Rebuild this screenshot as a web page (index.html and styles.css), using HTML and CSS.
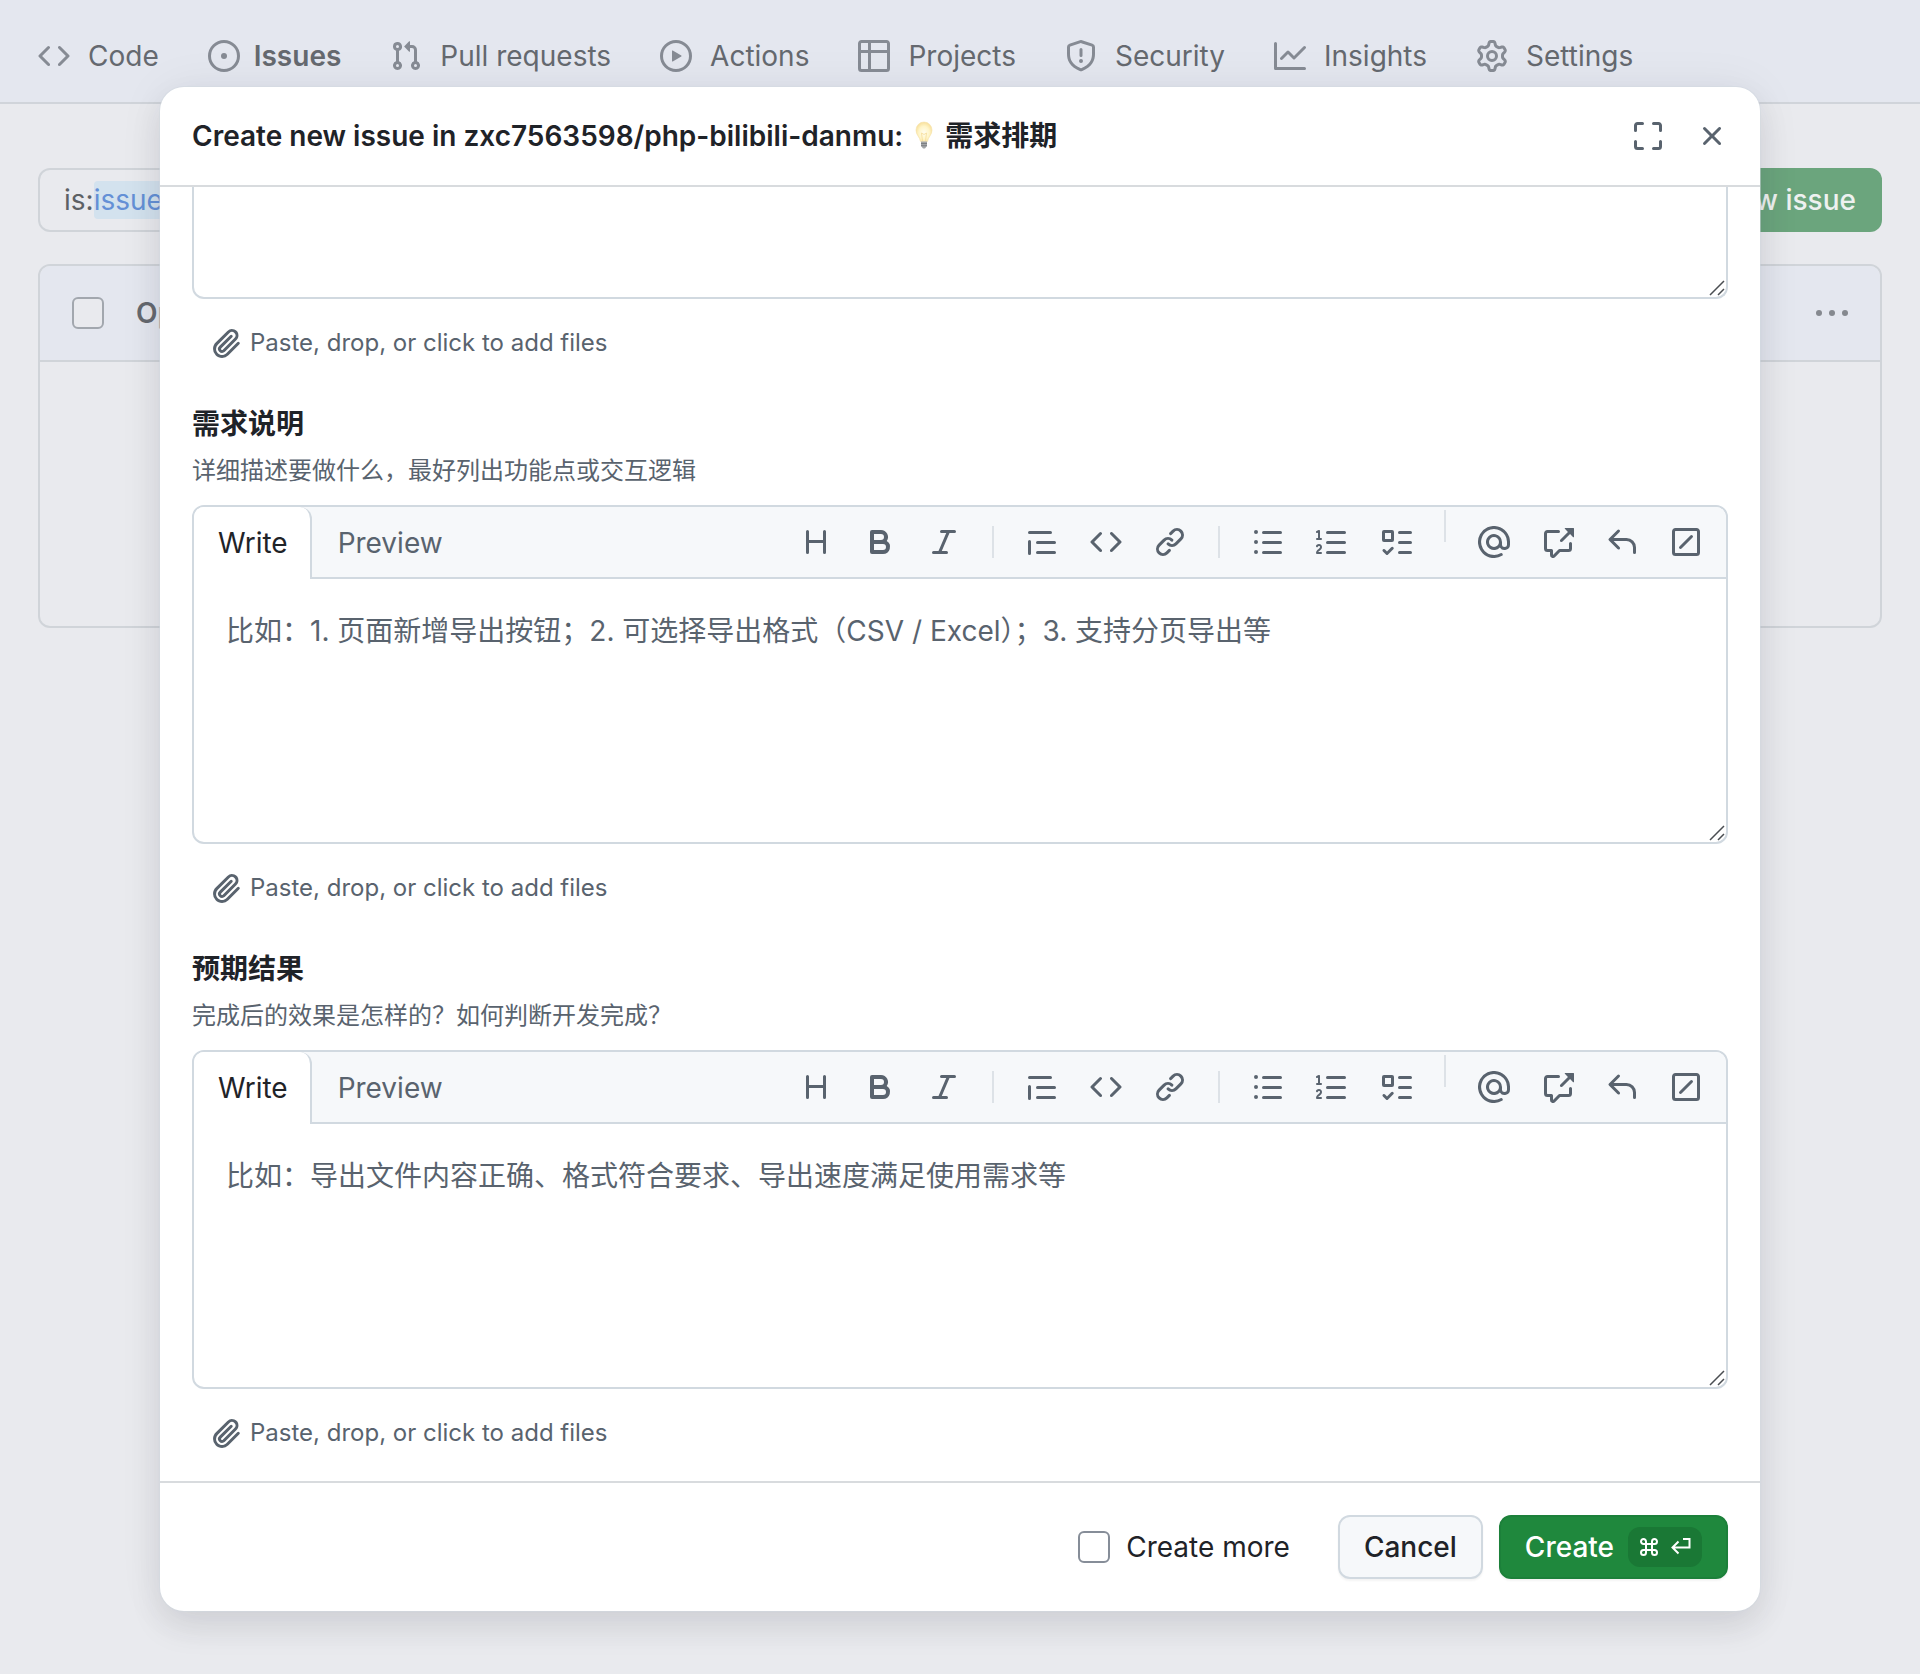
FILE: index.html
```html
<!DOCTYPE html>
<html lang="en">
<head>
<meta charset="utf-8">
<meta name="viewport" content="width=device-width, initial-scale=1">
<title>Create new issue</title>
<link rel="stylesheet" href="styles.css">
</head>
<body>
<svg class="sprite" aria-hidden="true">
  <symbol id="code" viewBox="0 0 16 16"><path d="m11.28 3.22 4.25 4.25a.75.75 0 0 1 0 1.06l-4.25 4.25a.749.749 0 0 1-1.275-.326.749.749 0 0 1 .215-.734L13.94 8l-3.72-3.72a.749.749 0 0 1 .326-1.275.749.749 0 0 1 .734.215Zm-6.56 0a.751.751 0 0 1 1.042.018.751.751 0 0 1 .018 1.042L2.06 8l3.72 3.72a.749.749 0 0 1-.326 1.275.749.749 0 0 1-.734-.215L.47 8.53a.75.75 0 0 1 0-1.06Z"/></symbol>
  <symbol id="issue" viewBox="0 0 16 16"><path d="M8 9.5a1.5 1.5 0 1 0 0-3 1.5 1.5 0 0 0 0 3Z"/><path d="M8 0a8 8 0 1 1 0 16A8 8 0 0 1 8 0ZM1.5 8a6.5 6.5 0 1 0 13 0 6.5 6.5 0 0 0-13 0Z"/></symbol>
  <symbol id="pull" viewBox="0 0 16 16"><path d="M1.5 3.25a2.25 2.25 0 1 1 3 2.122v5.256a2.251 2.251 0 1 1-1.5 0V5.372A2.25 2.25 0 0 1 1.5 3.25Zm5.677-.177L9.573.677A.25.25 0 0 1 10 .854V2.5h1A2.5 2.5 0 0 1 13.5 5v5.628a2.251 2.251 0 1 1-1.5 0V5a1 1 0 0 0-1-1h-1v1.646a.25.25 0 0 1-.427.177L7.177 3.427a.25.25 0 0 1 0-.354ZM3.75 2.5a.75.75 0 1 0 0 1.5.75.75 0 0 0 0-1.5Zm0 9.5a.75.75 0 1 0 0 1.5.75.75 0 0 0 0-1.5Zm8.25.75a.75.75 0 1 0 1.5 0 .75.75 0 0 0-1.5 0Z"/></symbol>
  <symbol id="play" viewBox="0 0 16 16"><path d="M8 0a8 8 0 1 1 0 16A8 8 0 0 1 8 0ZM1.5 8a6.5 6.5 0 1 0 13 0 6.5 6.5 0 0 0-13 0Zm4.879-2.773 4.264 2.559a.25.25 0 0 1 0 .428l-4.264 2.559A.25.25 0 0 1 6 10.559V5.442a.25.25 0 0 1 .379-.215Z"/></symbol>
  <symbol id="table" viewBox="0 0 16 16"><path d="M0 1.75C0 .784.784 0 1.75 0h12.5C15.216 0 16 .784 16 1.75v12.5A1.75 1.75 0 0 1 14.25 16H1.75A1.75 1.75 0 0 1 0 14.25ZM6.5 6.5v8h7.75a.25.25 0 0 0 .25-.25V6.5Zm8-1.5V1.75a.25.25 0 0 0-.25-.25H6.5V5Zm-13 1.5v7.75c0 .138.112.25.25.25H5v-8ZM5 5V1.5H1.75a.25.25 0 0 0-.25.25V5Z"/></symbol>
  <symbol id="shield" viewBox="0 0 16 16"><path d="M7.467.133a1.748 1.748 0 0 1 1.066 0l5.25 1.68A1.75 1.75 0 0 1 15 3.48V7c0 1.566-.32 3.182-1.303 4.682-.983 1.498-2.585 2.813-5.032 3.855a1.697 1.697 0 0 1-1.33 0c-2.447-1.042-4.049-2.357-5.032-3.855C1.32 10.182 1 8.566 1 7V3.48a1.75 1.75 0 0 1 1.217-1.667Zm.61 1.429a.25.25 0 0 0-.153 0l-5.25 1.68a.25.25 0 0 0-.174.238V7c0 1.358.275 2.666 1.057 3.86.784 1.194 2.121 2.34 4.366 3.297a.196.196 0 0 0 .154 0c2.245-.956 3.582-2.104 4.366-3.298C13.225 9.666 13.5 8.36 13.5 7V3.48a.251.251 0 0 0-.174-.237l-5.25-1.68ZM8.75 4.75v3a.75.75 0 0 1-1.5 0v-3a.75.75 0 0 1 1.5 0ZM9 10.5a1 1 0 1 1-2 0 1 1 0 0 1 2 0Z"/></symbol>
  <symbol id="graph" viewBox="0 0 16 16"><path d="M1.5 1.75V13.5h13.75a.75.75 0 0 1 0 1.5H.75a.75.75 0 0 1-.75-.75V1.75a.75.75 0 0 1 1.5 0Zm14.28 2.53-5.25 5.25a.75.75 0 0 1-1.06 0L7 7.06 4.28 9.78a.751.751 0 0 1-1.042-.018.751.751 0 0 1-.018-1.042l3.25-3.25a.75.75 0 0 1 1.06 0L10 7.94l4.72-4.72a.751.751 0 0 1 1.042.018.751.751 0 0 1 .018 1.042Z"/></symbol>
  <symbol id="gear" viewBox="0 0 16 16"><path d="M8 0a8.2 8.2 0 0 1 .701.031C9.444.095 9.99.645 10.16 1.29l.288 1.107c.018.066.079.158.212.224.231.114.454.243.668.386.123.082.233.09.299.071l1.103-.303c.644-.176 1.392.021 1.82.63.27.385.506.792.704 1.218.315.675.111 1.422-.364 1.891l-.814.806c-.049.048-.098.147-.088.294.016.257.016.515 0 .772-.01.147.038.246.088.294l.814.806c.475.469.679 1.216.364 1.891a7.977 7.977 0 0 1-.704 1.217c-.428.61-1.176.807-1.82.63l-1.102-.302c-.067-.019-.177-.011-.3.071a5.909 5.909 0 0 1-.668.386c-.133.066-.194.158-.211.224l-.29 1.106c-.168.646-.715 1.196-1.458 1.26a8.006 8.006 0 0 1-1.402 0c-.743-.064-1.289-.614-1.458-1.26l-.289-1.106c-.018-.066-.079-.158-.212-.224a5.738 5.738 0 0 1-.668-.386c-.123-.082-.233-.09-.299-.071l-1.103.303c-.644.176-1.392-.021-1.82-.63a8.12 8.12 0 0 1-.704-1.218c-.315-.675-.111-1.422.363-1.891l.815-.806c.05-.048.098-.147.088-.294a6.214 6.214 0 0 1 0-.772c.01-.147-.038-.246-.088-.294l-.815-.806C.635 6.045.431 5.298.746 4.623a7.92 7.92 0 0 1 .704-1.217c.428-.61 1.176-.807 1.82-.63l1.102.302c.067.019.177.011.3-.071.214-.143.437-.272.668-.386.133-.066.194-.158.211-.224l.29-1.106C6.009.645 6.556.095 7.299.03 7.53.01 7.764 0 8 0Zm-.571 1.525c-.036.003-.108.036-.137.146l-.289 1.105c-.147.561-.549.967-.998 1.189-.173.086-.34.183-.5.29-.417.278-.97.423-1.529.27l-1.103-.303c-.109-.03-.175.016-.195.045-.22.312-.412.644-.573.99-.014.031-.021.11.059.19l.815.806c.411.406.562.957.53 1.456a4.709 4.709 0 0 0 0 .582c.032.499-.119 1.05-.53 1.456l-.815.806c-.081.08-.073.159-.059.19.162.346.353.677.573.989.02.03.085.076.195.046l1.102-.303c.56-.153 1.113-.008 1.53.27.161.107.328.204.501.29.447.222.85.629.997 1.189l.289 1.105c.029.109.101.143.137.146a6.6 6.6 0 0 0 1.142 0c.036-.003.108-.036.137-.146l.289-1.105c.147-.561.549-.967.998-1.189.173-.086.34-.183.5-.29.417-.278.97-.423 1.529-.27l1.103.303c.109.029.175-.016.195-.045.22-.313.411-.644.573-.99.014-.031.021-.11-.059-.19l-.815-.806c-.411-.406-.562-.957-.53-1.456a4.709 4.709 0 0 0 0-.582c-.032-.499.119-1.05.53-1.456l.815-.806c.081-.08.073-.159.059-.19a6.464 6.464 0 0 0-.573-.989c-.02-.03-.085-.076-.195-.046l-1.102.303c-.56.153-1.113.008-1.53-.27a4.44 4.44 0 0 0-.501-.29c-.447-.222-.85-.629-.997-1.189l-.289-1.105c-.029-.11-.101-.143-.137-.146a6.6 6.6 0 0 0-1.142 0ZM11 8a3 3 0 1 1-6 0 3 3 0 0 1 6 0ZM9.5 8a1.5 1.5 0 1 0-3.001.001A1.5 1.5 0 0 0 9.5 8Z"/></symbol>
  <symbol id="kebab" viewBox="0 0 16 16"><circle cx="1.5" cy="8" r="1.5"/><circle cx="8" cy="8" r="1.5"/><circle cx="14.5" cy="8" r="1.5"/></symbol>
  <symbol id="heading" viewBox="0 0 16 16"><path d="M3.75 2a.75.75 0 0 1 .75.75V7h7V2.75a.75.75 0 0 1 1.5 0v10.5a.75.75 0 0 1-1.5 0V8.5h-7v4.75a.75.75 0 0 1-1.5 0V2.75A.75.75 0 0 1 3.75 2Z"/></symbol>
  <symbol id="bold" viewBox="0 0 16 16"><path d="M4 2h4.5a3.501 3.501 0 0 1 2.852 5.53A3.499 3.499 0 0 1 9.5 14H4a1 1 0 0 1-1-1V3a1 1 0 0 1 1-1Zm1 7v3h4.5a1.5 1.5 0 0 0 0-3Zm3.5-2a1.5 1.5 0 0 0 0-3H5v3Z"/></symbol>
  <symbol id="italic" viewBox="0 0 16 16"><path d="M6 2.75A.75.75 0 0 1 6.75 2h6.5a.75.75 0 0 1 0 1.5h-2.505l-3.858 9H9.25a.75.75 0 0 1 0 1.5h-6.5a.75.75 0 0 1 0-1.5h2.505l3.858-9H6.75A.75.75 0 0 1 6 2.75Z"/></symbol>
  <symbol id="quote" viewBox="0 0 16 16"><path d="M1.75 2.5h10.5a.75.75 0 0 1 0 1.5H1.75a.75.75 0 0 1 0-1.5Zm4 5h8.5a.75.75 0 0 1 0 1.5h-8.5a.75.75 0 0 1 0-1.5Zm0 5h8.5a.75.75 0 0 1 0 1.5h-8.5a.75.75 0 0 1 0-1.5ZM2.5 7.75v6a.75.75 0 0 1-1.5 0v-6a.75.75 0 0 1 1.5 0Z"/></symbol>
  <symbol id="link" viewBox="0 0 16 16"><path d="m7.775 3.275 1.25-1.25a3.5 3.5 0 1 1 4.95 4.95l-2.5 2.5a3.5 3.5 0 0 1-4.95 0 .751.751 0 0 1 .018-1.042.751.751 0 0 1 1.042-.018 1.998 1.998 0 0 0 2.83 0l2.5-2.5a2.002 2.002 0 0 0-2.83-2.83l-1.25 1.25a.751.751 0 0 1-1.042-.018.751.751 0 0 1-.018-1.042Zm-4.69 9.64a1.998 1.998 0 0 0 2.83 0l1.25-1.25a.751.751 0 0 1 1.042.018.751.751 0 0 1 .018 1.042l-1.25 1.25a3.5 3.5 0 1 1-4.95-4.95l2.5-2.5a3.5 3.5 0 0 1 4.95 0 .751.751 0 0 1-.018 1.042.751.751 0 0 1-1.042.018 1.998 1.998 0 0 0-2.83 0l-2.5 2.5a1.998 1.998 0 0 0 0 2.83Z"/></symbol>
  <symbol id="bullets" viewBox="0 0 16 16"><path d="M5.75 2.5h8.5a.75.75 0 0 1 0 1.5h-8.5a.75.75 0 0 1 0-1.5Zm0 5h8.5a.75.75 0 0 1 0 1.5h-8.5a.75.75 0 0 1 0-1.5Zm0 5h8.5a.75.75 0 0 1 0 1.5h-8.5a.75.75 0 0 1 0-1.5ZM2 14a1 1 0 1 1 0-2 1 1 0 0 1 0 2Zm1-6a1 1 0 1 1-2 0 1 1 0 0 1 2 0ZM2 4a1 1 0 1 1 0-2 1 1 0 0 1 0 2Z"/></symbol>
  <symbol id="numbers" viewBox="0 0 16 16"><path d="M5 3.25a.75.75 0 0 1 .75-.75h8.5a.75.75 0 0 1 0 1.5h-8.5A.75.75 0 0 1 5 3.25Zm0 5a.75.75 0 0 1 .75-.75h8.5a.75.75 0 0 1 0 1.5h-8.5A.75.75 0 0 1 5 8.25Zm0 5a.75.75 0 0 1 .75-.75h8.5a.75.75 0 0 1 0 1.5h-8.5a.75.75 0 0 1-.75-.75ZM.924 10.32a.5.5 0 0 1-.851-.525l.001-.001.001-.002.002-.004.007-.011c.097-.144.215-.273.348-.384.228-.19.588-.392 1.068-.392.468 0 .858.181 1.126.484.259.294.377.673.377 1.038 0 .987-.686 1.495-1.156 1.845l-.047.035c-.303.225-.522.4-.654.597h1.357a.5.5 0 0 1 0 1H.5a.5.5 0 0 1-.5-.5c0-1.005.692-1.52 1.167-1.875l.035-.025c.531-.396.8-.625.8-1.078a.57.57 0 0 0-.128-.376C1.806 10.068 1.695 10 1.5 10a.658.658 0 0 0-.429.163.835.835 0 0 0-.144.153ZM2.003 2.5V6h.503a.5.5 0 0 1 0 1H.5a.5.5 0 0 1 0-1h.503V3.308l-.28.14a.5.5 0 0 1-.446-.895l1.003-.5a.5.5 0 0 1 .723.447Z"/></symbol>
  <symbol id="tasks" viewBox="0 0 16 16"><path d="M2 2h4a1 1 0 0 1 1 1v4a1 1 0 0 1-1 1H2a1 1 0 0 1-1-1V3a1 1 0 0 1 1-1Zm4.655 8.595a.75.75 0 0 1 0 1.06L4.03 14.28a.75.75 0 0 1-1.06 0l-1.5-1.5a.749.749 0 0 1 .326-1.275.749.749 0 0 1 .734.215l.97.97 2.095-2.095a.75.75 0 0 1 1.06 0ZM9.75 2.5h5.5a.75.75 0 0 1 0 1.5h-5.5a.75.75 0 0 1 0-1.5Zm0 5h5.5a.75.75 0 0 1 0 1.5h-5.5a.75.75 0 0 1 0-1.5Zm0 5h5.5a.75.75 0 0 1 0 1.5h-5.5a.75.75 0 0 1 0-1.5Zm-7.25-9v3h3v-3Z"/></symbol>
  <symbol id="mention" viewBox="0 0 16 16"><path d="M4.75 2.37a6.501 6.501 0 0 0 6.5 11.26.75.75 0 0 1 .75 1.298A7.999 7.999 0 0 1 .989 4.148 8 8 0 0 1 16 7.75v1.5a2.75 2.75 0 0 1-5.072 1.475 3.999 3.999 0 0 1-6.65-4.19A4 4 0 0 1 12 8v1.25a1.25 1.25 0 0 0 2.5 0V7.867a6.5 6.5 0 0 0-9.75-5.496ZM10.5 8a2.5 2.5 0 1 0-5 0 2.5 2.5 0 0 0 5 0Z"/></symbol>
  <symbol id="crossref" viewBox="0 0 16 16"><path d="M2.75 3.5a.25.25 0 0 0-.25.25v7.5c0 .138.112.25.25.25h2a.75.75 0 0 1 .75.75v2.19l2.72-2.72a.749.749 0 0 1 .53-.22h4.5a.25.25 0 0 0 .25-.25v-2.5a.75.75 0 0 1 1.5 0v2.5A1.75 1.75 0 0 1 13.25 13H9.06l-2.573 2.573A1.458 1.458 0 0 1 4 14.543V13H2.75A1.75 1.75 0 0 1 1 11.25v-7.5C1 2.784 1.784 2 2.75 2h5.5a.75.75 0 0 1 0 1.5ZM16 1.25v4.146a.25.25 0 0 1-.427.177L14.03 4.03l-3.75 3.75a.749.749 0 0 1-1.275-.326.749.749 0 0 1 .215-.734l3.75-3.75-1.543-1.543A.25.25 0 0 1 11.604 1h4.146a.25.25 0 0 1 .25.25Z"/></symbol>
  <symbol id="reply" viewBox="0 0 16 16"><path d="M6.78 1.97a.75.75 0 0 1 0 1.06L3.81 6h6.44A4.75 4.75 0 0 1 15 10.75v2.5a.75.75 0 0 1-1.5 0v-2.5a3.25 3.25 0 0 0-3.25-3.25H3.81l2.97 2.97a.749.749 0 0 1-.326 1.275.749.749 0 0 1-.734-.215L1.47 7.28a.75.75 0 0 1 0-1.06l4.25-4.25a.75.75 0 0 1 1.06 0Z"/></symbol>
  <symbol id="slash" viewBox="0 0 16 16"><path d="M13.25 1c.966 0 1.75.784 1.75 1.75v10.5A1.75 1.75 0 0 1 13.25 15H2.75A1.75 1.75 0 0 1 1 13.25V2.75C1 1.784 1.784 1 2.75 1ZM2.75 2.5a.25.25 0 0 0-.25.25v10.5c0 .138.112.25.25.25h10.5a.25.25 0 0 0 .25-.25V2.75a.25.25 0 0 0-.25-.25Zm8.53 3.28-5.5 5.5a.75.75 0 0 1-1.06-1.06l5.5-5.5a.75.75 0 0 1 1.06 1.06Z"/></symbol>
  <symbol id="clip" viewBox="0 0 16 16"><path d="M12.212 3.02a1.753 1.753 0 0 0-2.478.003l-5.83 5.83a3.007 3.007 0 0 0-.88 2.127c0 .795.315 1.551.88 2.116.567.567 1.333.89 2.126.89.79 0 1.548-.321 2.116-.89l5.48-5.48a.75.75 0 0 1 1.061 1.06l-5.48 5.48a4.492 4.492 0 0 1-3.177 1.33c-1.2 0-2.345-.487-3.187-1.33a4.483 4.483 0 0 1-1.32-3.177c0-1.195.475-2.341 1.32-3.186l5.83-5.83a3.25 3.25 0 0 1 5.553 2.297c0 .863-.343 1.691-.953 2.301L7.439 12.39c-.375.377-.884.59-1.416.593a1.998 1.998 0 0 1-1.412-.593 1.992 1.992 0 0 1 0-2.828l5.48-5.48a.751.751 0 0 1 1.042.018.751.751 0 0 1 .018 1.042l-5.48 5.48a.492.492 0 0 0 0 .707.499.499 0 0 0 .352.154.51.51 0 0 0 .356-.154l5.833-5.827a1.755 1.755 0 0 0 0-2.481Z"/></symbol>
  <symbol id="full" viewBox="0 0 16 16"><path d="M1.75 10a.75.75 0 0 1 .75.75v2.5c0 .138.112.25.25.25h2.5a.75.75 0 0 1 0 1.5h-2.5A1.75 1.75 0 0 1 1 13.25v-2.5a.75.75 0 0 1 .75-.75Zm12.5 0a.75.75 0 0 1 .75.75v2.5A1.75 1.75 0 0 1 13.25 15h-2.5a.75.75 0 0 1 0-1.5h2.5a.25.25 0 0 0 .25-.25v-2.5a.75.75 0 0 1 .75-.75ZM2.75 2.5a.25.25 0 0 0-.25.25v2.5a.75.75 0 0 1-1.5 0v-2.5C1 1.784 1.784 1 2.75 1h2.5a.75.75 0 0 1 0 1.5ZM10 1.75a.75.75 0 0 1 .75-.75h2.5c.966 0 1.75.784 1.75 1.75v2.5a.75.75 0 0 1-1.5 0v-2.5a.25.25 0 0 0-.25-.25h-2.5a.75.75 0 0 1-.75-.75Z"/></symbol>
  <symbol id="close" viewBox="0 0 16 16"><path d="M3.72 3.72a.75.75 0 0 1 1.06 0L8 6.94l3.22-3.22a.749.749 0 0 1 1.275.326.749.749 0 0 1-.215.734L9.06 8l3.22 3.22a.749.749 0 0 1-.326 1.275.749.749 0 0 1-.734-.215L8 9.06l-3.22 3.22a.751.751 0 0 1-1.042-.018.751.751 0 0 1-.018-1.042L6.94 8 3.72 4.78a.75.75 0 0 1 0-1.06Z"/></symbol>
  <symbol id="grip" viewBox="0 0 16 16"><path d="M1 15 15 1M9 15l6-6" fill="none" stroke="#4a4d52" stroke-width="1.5"/></symbol>
</svg>

<div class="page">
  <nav class="repo-nav" aria-label="Repository">
    <a href="#"><svg class="icon"><use href="#code"/></svg>Code</a>
    <a href="#" class="current" aria-current="page"><svg class="icon"><use href="#issue"/></svg>Issues</a>
    <a href="#"><svg class="icon"><use href="#pull"/></svg>Pull requests</a>
    <a href="#"><svg class="icon"><use href="#play"/></svg>Actions</a>
    <a href="#"><svg class="icon"><use href="#table"/></svg>Projects</a>
    <a href="#"><svg class="icon"><use href="#shield"/></svg>Security</a>
    <a href="#"><svg class="icon"><use href="#graph"/></svg>Insights</a>
    <a href="#"><svg class="icon"><use href="#gear"/></svg>Settings</a>
  </nav>
  <main class="issues">
    <div class="filter-row">
      <div class="filter">is:<span class="token">issue</span></div>
      <button type="button" class="new-issue">New issue</button>
    </div>
    <section class="issue-list">
      <header class="list-header">
        <input type="checkbox" class="check muted" aria-label="Select all issues">
        <a href="#" class="open-tab">Open</a>
        <button type="button" class="list-menu" aria-label="More"><svg class="icon"><use href="#kebab"/></svg></button>
      </header>
    </section>
  </main>
</div>

<div class="overlay">
  <div class="dialog" role="dialog" aria-modal="true" aria-labelledby="dialog-title">
    <header class="dialog-header">
      <h1 id="dialog-title">Create new issue in zxc7563598/php-bilibili-danmu: <svg class="bulb" viewBox="0 0 28 28" aria-hidden="true"><defs><radialGradient id="glow" cx="50%" cy="55%" r="55%"><stop offset="0" stop-color="#fffdf0"/><stop offset=".6" stop-color="#fff5c8"/><stop offset="1" stop-color="#f8df9a"/></radialGradient></defs><path d="M14 1a8 8 0 0 0-8 8.200c0 4.800 3.800 6.600 4.500 11.300h7C18.200 15.800 22 14 22 9.200A8 8 0 0 0 14 1Z" fill="url(#glow)" stroke="#f5e2ab" stroke-width=".6"/><path d="M12.500 20 11.500 12l2.500 1.500 2.500-1.500-1 8" fill="none" stroke="#f5dc98" stroke-width=".8"/><path d="M11 20.500h6v4.500l-2 2.500h-2l-2-2.500Z" fill="#a3a5a7"/><path d="M11 22.500h6M11 24.700h6" stroke="#73767a" stroke-width=".8"/></svg> 需求排期</h1>
      <button type="button" class="icon-button" aria-label="Full screen"><svg class="icon"><use href="#full"/></svg></button>
      <button type="button" class="icon-button" aria-label="Close"><svg class="icon"><use href="#close"/></svg></button>
    </header>

    <div class="dialog-body">
      <div class="editor cut">
        <textarea aria-label="Background"></textarea>
        <svg class="grip"><use href="#grip"/></svg>
      </div>
      <button type="button" class="attach"><svg class="clip"><use href="#clip"/></svg>Paste, drop, or click to add files</button>

      <section class="field">
        <label class="field-title" for="details">需求说明</label>
        <p class="field-hint">详细描述要做什么，最好列出功能点或交互逻辑</p>
        <div class="editor">
          <div class="editor-bar">
            <button type="button" class="tab selected">Write</button>
            <button type="button" class="tab">Preview</button>
            <div class="tools">
              <button type="button" aria-label="Heading"><svg class="icon"><use href="#heading"/></svg></button>
              <button type="button" aria-label="Bold"><svg class="icon"><use href="#bold"/></svg></button>
              <button type="button" aria-label="Italic"><svg class="icon"><use href="#italic"/></svg></button>
              <span class="divider"></span>
              <button type="button" aria-label="Quote"><svg class="icon"><use href="#quote"/></svg></button>
              <button type="button" aria-label="Code"><svg class="icon"><use href="#code"/></svg></button>
              <button type="button" aria-label="Link"><svg class="icon"><use href="#link"/></svg></button>
              <span class="divider"></span>
              <button type="button" aria-label="Bulleted list"><svg class="icon"><use href="#bullets"/></svg></button>
              <button type="button" aria-label="Numbered list"><svg class="icon"><use href="#numbers"/></svg></button>
              <button type="button" aria-label="Task list"><svg class="icon"><use href="#tasks"/></svg></button>
              <span class="divider raised"></span>
              <button type="button" aria-label="Mention"><svg class="icon"><use href="#mention"/></svg></button>
              <button type="button" aria-label="Reference"><svg class="icon"><use href="#crossref"/></svg></button>
              <button type="button" aria-label="Saved replies"><svg class="icon"><use href="#reply"/></svg></button>
              <button type="button" aria-label="Slash commands"><svg class="icon"><use href="#slash"/></svg></button>
            </div>
          </div>
          <textarea id="details" placeholder="比如：1. 页面新增导出按钮；2. 可选择导出格式（CSV / Excel）；3. 支持分页导出等"></textarea>
          <svg class="grip"><use href="#grip"/></svg>
        </div>
        <button type="button" class="attach"><svg class="clip"><use href="#clip"/></svg>Paste, drop, or click to add files</button>
      </section>

      <section class="field">
        <label class="field-title" for="result">预期结果</label>
        <p class="field-hint">完成后的效果是怎样的？如何判断开发完成？</p>
        <div class="editor">
          <div class="editor-bar">
            <button type="button" class="tab selected">Write</button>
            <button type="button" class="tab">Preview</button>
            <div class="tools">
              <button type="button" aria-label="Heading"><svg class="icon"><use href="#heading"/></svg></button>
              <button type="button" aria-label="Bold"><svg class="icon"><use href="#bold"/></svg></button>
              <button type="button" aria-label="Italic"><svg class="icon"><use href="#italic"/></svg></button>
              <span class="divider"></span>
              <button type="button" aria-label="Quote"><svg class="icon"><use href="#quote"/></svg></button>
              <button type="button" aria-label="Code"><svg class="icon"><use href="#code"/></svg></button>
              <button type="button" aria-label="Link"><svg class="icon"><use href="#link"/></svg></button>
              <span class="divider"></span>
              <button type="button" aria-label="Bulleted list"><svg class="icon"><use href="#bullets"/></svg></button>
              <button type="button" aria-label="Numbered list"><svg class="icon"><use href="#numbers"/></svg></button>
              <button type="button" aria-label="Task list"><svg class="icon"><use href="#tasks"/></svg></button>
              <span class="divider raised"></span>
              <button type="button" aria-label="Mention"><svg class="icon"><use href="#mention"/></svg></button>
              <button type="button" aria-label="Reference"><svg class="icon"><use href="#crossref"/></svg></button>
              <button type="button" aria-label="Saved replies"><svg class="icon"><use href="#reply"/></svg></button>
              <button type="button" aria-label="Slash commands"><svg class="icon"><use href="#slash"/></svg></button>
            </div>
          </div>
          <textarea id="result" placeholder="比如：导出文件内容正确、格式符合要求、导出速度满足使用需求等"></textarea>
          <svg class="grip"><use href="#grip"/></svg>
        </div>
        <button type="button" class="attach"><svg class="clip"><use href="#clip"/></svg>Paste, drop, or click to add files</button>
      </section>
    </div>

    <footer class="dialog-footer">
      <label class="more"><input type="checkbox" class="check">Create more</label>
      <button type="button" class="button">Cancel</button>
      <button type="button" class="button primary">Create
        <span class="keys" aria-hidden="true">
          <svg viewBox="0 0 20 20"><path d="M7 7h6v6H7ZM7 7H4.500A2.500 2.500 0 1 1 7 4.500ZM13 7V4.500A2.500 2.500 0 1 1 15.500 7ZM13 13h2.500a2.500 2.500 0 1 1-2.500 2.500ZM7 13v2.500A2.500 2.500 0 1 1 4.500 13Z"/></svg>
          <svg viewBox="0 0 20 20"><path d="M12 2h6.500v8.500H2M7.500 4.500l-6 6 6 6"/></svg>
        </span>
      </button>
    </footer>
  </div>
</div>
</body>
</html>
```
FILE: styles.css
```css
* { box-sizing: border-box; }

body {
  margin: 0;
  min-height: 100vh;
  position: relative;
  background: #e9eaee;
  color: #1f2328;
  font: 28px/42px Inter, "Noto Sans CJK SC", sans-serif;
}

button, textarea, input { font: inherit; color: inherit; }
button { border: 0; padding: 0; background: none; }
a { color: inherit; text-decoration: none; }

.sprite { position: absolute; width: 0; height: 0; }
.icon { display: block; flex: none; width: 32px; height: 32px; fill: currentColor; }

/* Repository page behind the dialog */
.repo-nav {
  display: flex;
  gap: 49px;
  height: 104px;
  padding: 10px 38px 0;
  align-items: center;
  border-bottom: 2px solid #d0d4da;
  background: #e4e7ef;
  color: #65696f;
}
.repo-nav a { display: flex; align-items: center; gap: 18px; white-space: nowrap; }
.repo-nav .icon { color: #868b94; }
.repo-nav .current { font-weight: 600; gap: 14px; }

.issues { padding: 64px 38px; }
.filter-row { display: flex; gap: 16px; margin-bottom: 32px; }
.filter {
  flex: 1;
  height: 64px;
  padding: 9px 24px;
  border: 2px solid #d0d4d9;
  border-radius: 12px;
  color: #5c6065;
}
.token { padding: 2px 0; border-radius: 4px; background: #d3e2ee; color: #6490d6; }
.new-issue {
  height: 64px;
  padding: 0 26px;
  border-radius: 12px;
  background: #6ba57d;
  color: #eef1f0;
  font-weight: 500;
}
.issue-list {
  min-height: 364px;
  border: 2px solid #d0d4d9;
  border-radius: 12px;
  overflow: hidden;
}
.list-header {
  display: flex;
  align-items: center;
  height: 96px;
  padding: 0 32px;
  border-bottom: 2px solid #d0d4d9;
  background: #e4e7ef;
}
.open-tab { margin-left: 32px; color: #65696f; font-weight: 600; }
.list-menu { margin-left: auto; color: #85898f; }

.check {
  appearance: none;
  flex: none;
  width: 32px;
  height: 32px;
  margin: 0;
  border: 2px solid #868d98;
  border-radius: 6px;
  background: #fff;
}
.check.muted { border-color: #a2a7ae; background: #e9eaee; }

/* Dialog */
.overlay { position: absolute; inset: 0; padding: 87px 160px 63px; }
.dialog {
  max-width: 1600px;
  margin: 0 auto;
  border-radius: 24px;
  background: #fff;
  box-shadow: 0 0 0 1px rgba(209, 217, 224, .5), 0 16px 32px rgba(37, 41, 46, .1), 0 0 48px rgba(37, 41, 46, .06);
}
.dialog-header {
  display: flex;
  align-items: center;
  gap: 32px;
  height: 100px;
  padding: 0 32px;
  border-bottom: 2px solid #d8dbde;
}
.dialog-header h1 { flex: 1; margin: 0; font-size: 28px; line-height: 42px; font-weight: 600; }
.bulb { width: 28px; height: 28px; vertical-align: -3px; }
.icon-button { color: #59636e; }

.dialog-body { padding: 0 32px 24px; }
.field { padding-top: 36px; }
.field-title { display: block; font-weight: 600; }
.field-hint { margin: 8px 0 16px; color: #59636e; font-size: 24px; line-height: 36px; }

.editor { position: relative; border: 2px solid #d1d9e0; border-radius: 12px; background: #fff; }
.editor textarea {
  display: block;
  width: 100%;
  height: 263px;
  padding: 31px 32px;
  border: 0;
  outline: 0;
  border-radius: 12px;
  background: none;
  resize: none;
}
.editor textarea::placeholder { color: #59636e; opacity: 1; }
.editor.cut { border-top: 0; border-radius: 0 0 12px 12px; }
.editor.cut textarea { height: 110px; }
.grip { position: absolute; right: 1px; bottom: 1px; width: 16px; height: 16px; }

.editor-bar {
  display: flex;
  height: 72px;
  border-radius: 10px 10px 0 0;
  background: #f6f8fa;
  box-shadow: inset 0 -2px #d1d9e0;
}
.tab { padding: 0 26px; color: #59636e; }
.tab.selected {
  padding: 0 22px 0 24px;
  border-right: 2px solid #d1d9e0;
  border-radius: 10px 12px 0 0;
  background: #fff;
  color: #1f2328;
}
.tools { display: flex; align-items: center; height: 70px; margin-left: auto; padding-right: 8px; color: #59636e; }
.tools button { display: grid; place-items: center; width: 64px; height: 64px; }
.divider { width: 2px; height: 32px; margin: 0 16px; background: #dde2e7; }
.divider.raised { align-self: flex-start; margin-top: 3px; }

.attach {
  display: flex;
  align-items: center;
  gap: 8px;
  height: 48px;
  margin-top: 20px;
  padding: 0 18px;
  color: #59636e;
  font-size: 24px;
}
.clip { width: 32px; height: 32px; fill: currentColor; }

.dialog-footer {
  display: flex;
  align-items: center;
  justify-content: flex-end;
  gap: 16px;
  padding: 32px;
  border-top: 2px solid #d8dbde;
}
.more { display: flex; align-items: center; gap: 16px; margin-right: 32px; }
.button {
  display: flex;
  align-items: center;
  gap: 14px;
  height: 64px;
  padding: 0 24px;
  border: 2px solid #d1d9e0;
  border-radius: 12px;
  background: #f6f8fa;
  box-shadow: 0 2px 2px rgba(31, 35, 40, .05);
  font-weight: 500;
}
.button.primary { border-color: #1c803a; background: #1f883d; color: #fff; }
.keys {
  display: flex;
  align-items: center;
  justify-content: center;
  gap: 12px;
  width: 74px;
  height: 40px;
  border-radius: 12px;
  background: #1a7835;
}
.keys svg { width: 20px; height: 20px; fill: none; stroke: currentColor; stroke-width: 2; }
```
